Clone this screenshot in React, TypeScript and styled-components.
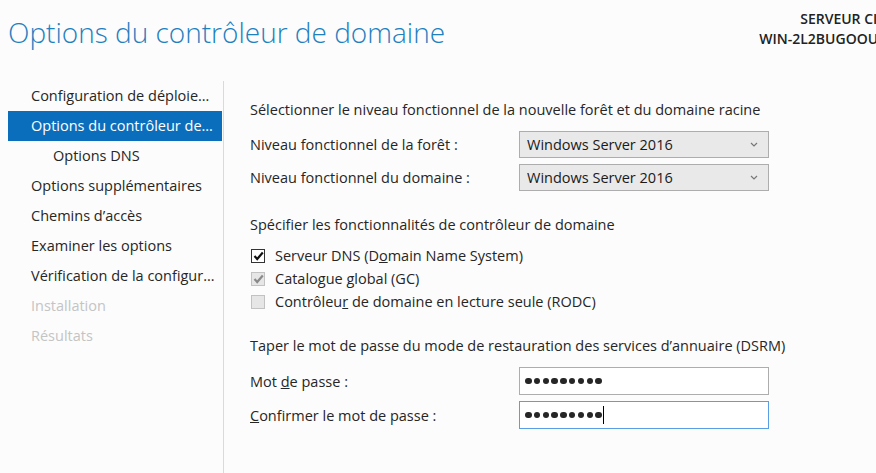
import styled, { createGlobalStyle } from 'styled-components'

const Global = createGlobalStyle`
  html, body {
    margin: 0;
    background: #fcfcfc;
    overflow: hidden;
  }
  body {
    font-family: 'Open Sans', 'Noto Sans', sans-serif;
    font-size: 14.5px;
    color: #262626;
  }
`

const Window = styled.div`
  width: 912px;
  height: 473px;
  display: flex;
  flex-direction: column;
`

const Header = styled.header`
  height: 81px;
  display: flex;
  justify-content: space-between;
  align-items: flex-start;
`

const Title = styled.h1`
  margin: 12px 0 0 8px;
  font-weight: 300;
  font-size: 28px;
  line-height: 40px;
  color: #1f80c0;
`

const Target = styled.div`
  padding: 9px 10px 0 0;
  font-weight: 600;
  font-size: 14px;
  line-height: 20px;
  text-align: right;
  color: #222;
  white-space: nowrap;
`

const Body = styled.div`
  flex: 1;
  display: flex;
`

const Sidebar = styled.nav`
  margin-left: 8px;
  width: 214px;
  padding-right: 1px;
  border-right: 1px solid #dadada;
`

const Item = styled.div<{ $active?: boolean; $disabled?: boolean; $sub?: boolean }>`
  height: 30px;
  line-height: 30px;
  padding-left: ${p => (p.$sub ? 45 : 23)}px;
  white-space: nowrap;
  overflow: hidden;
  background: ${p => (p.$active ? '#0b6ebd' : 'transparent')};
  color: ${p => (p.$active ? '#fff' : p.$disabled ? '#c4c4c4' : '#262626')};
`

const Main = styled.main`
  flex: 1;
  padding: 19px 0 0 26px;
  display: flex;
  flex-direction: column;
`

const Heading = styled.div<{ $top: number }>`
  margin-top: ${p => p.$top}px;
  line-height: 20px;
`

const Form = styled.div<{ $top: number }>`
  margin-top: ${p => p.$top}px;
  display: grid;
  grid-template-columns: 269px 250px;
  row-gap: 6px;
  align-items: center;
`

const Select = styled.div`
  height: 25px;
  border: 1px solid #adadad;
  background: #e9e9e9;
  display: flex;
  align-items: center;
  justify-content: space-between;
  padding: 0 10px 0 7px;
  color: #1a1a1a;
`

const Field = styled.div<{ $focus?: boolean }>`
  height: 26px;
  border: 1px solid ${p => (p.$focus ? '#5a9fe3' : '#adadad')};
  background: #fff;
  display: flex;
  align-items: center;
  padding-left: 5px;
`

const Dot = styled.span`
  width: 6.5px;
  height: 6.5px;
  border-radius: 50%;
  background: #262626;
  margin-right: 2.3px;
`

const Caret = styled.span`
  width: 1px;
  height: 18px;
  background: #000;
  margin-left: -1px;
`

const Checks = styled.div`
  margin-top: 9px;
  display: flex;
  flex-direction: column;
`

const CheckRow = styled.label`
  height: 23px;
  display: flex;
  align-items: center;
  gap: 10px;
  padding-left: 1px;
`

const Box = styled.span<{ $disabled?: boolean }>`
  width: 12px;
  height: 12px;
  border: 1px solid ${p => (p.$disabled ? '#c2c2c2' : '#333')};
  background: ${p => (p.$disabled ? '#e6e6e6' : '#fff')};
  display: flex;
  align-items: center;
  justify-content: center;
`

const Chevron = () => (
  <svg width="8" height="5" viewBox="0 0 8 5">
    <polyline points="1,1 4,4 7,1" fill="none" stroke="#777" strokeWidth="1.2" />
  </svg>
)

const Tick = ({ color }: { color: string }) => (
  <svg width="11" height="10" viewBox="0 0 11 10">
    <polyline points="1.5,5 4.2,8 9.8,1.5" fill="none" stroke={color} strokeWidth="2.2" />
  </svg>
)

const Password = ({ focus }: { focus?: boolean }) => (
  <Field $focus={focus}>
    {Array.from({ length: 9 }, (_, i) => <Dot key={i} />)}
    {focus && <Caret />}
  </Field>
)

const steps = [
  { label: 'Configuration de déploie…' },
  { label: 'Options du contrôleur de…', active: true },
  { label: 'Options DNS', sub: true },
  { label: 'Options supplémentaires' },
  { label: 'Chemins d’accès' },
  { label: 'Examiner les options' },
  { label: 'Vérification de la configur…' },
  { label: 'Installation', disabled: true },
  { label: 'Résultats', disabled: true },
]

export default function App() {
  return (
    <Window>
      <Global />
      <Header>
        <Title>Options du contrôleur de domaine</Title>
        <Target>
          <div>SERVEUR CIBLE</div>
          <div>WIN-2L2BUGOOUQM</div>
        </Target>
      </Header>
      <Body>
        <Sidebar>
          {steps.map(s => (
            <Item key={s.label} $active={s.active} $disabled={s.disabled} $sub={s.sub}>
              {s.label}
            </Item>
          ))}
        </Sidebar>
        <Main>
          <Heading $top={0}>
            Sélectionner le niveau fonctionnel de la nouvelle forêt et du domaine racine
          </Heading>
          <Form $top={11}>
            <span>Niveau fonctionnel de la forêt :</span>
            <Select>Windows Server 2016<Chevron /></Select>
            <span>Niveau fonctionnel du domaine :</span>
            <Select>Windows Server 2016<Chevron /></Select>
          </Form>

          <Heading $top={24}>Spécifier les fonctionnalités de contrôleur de domaine</Heading>
          <Checks>
            <CheckRow>
              <Box><Tick color="#111" /></Box>
              <span>Serveur DNS (D<u>o</u>main Name System)</span>
            </CheckRow>
            <CheckRow>
              <Box $disabled><Tick color="#8a8a8a" /></Box>
              <span>Catalogue <u>g</u>lobal (GC)</span>
            </CheckRow>
            <CheckRow>
              <Box $disabled />
              <span>Contrôleu<u>r</u> de domaine en lecture seule (RODC)</span>
            </CheckRow>
          </Checks>

          <Heading $top={23}>
            Taper le mot de passe du mode de restauration des services d’annuaire (DSRM)
          </Heading>
          <Form $top={11}>
            <span>Mot <u>d</u>e passe :</span>
            <Password />
            <span><u>C</u>onfirmer le mot de passe :</span>
            <Password focus />
          </Form>
        </Main>
      </Body>
    </Window>
  )
}
